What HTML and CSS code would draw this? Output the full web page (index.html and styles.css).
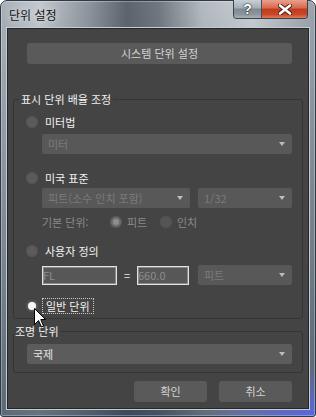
FILE: index.html
```html
<!DOCTYPE html>
<html lang="ko">

<head>
    <meta charset="UTF-8">
    <title>단위 설정</title>
    <link rel="stylesheet" href="styles.css">
</head>

<body>
    <div class="window">
        <div class="titlebar">
            <span class="title">단위 설정</span>
            <div class="caption">
                <div class="cap help">?</div>
                <div class="cap close">
                    <svg width="14" height="11" viewBox="0 0 14 11">
                        <path d="M2 1.5 L12 9.5 M12 1.5 L2 9.5" stroke="#4a1a10" stroke-width="4.4" stroke-linecap="round" />
                        <path d="M2 1.5 L12 9.5 M12 1.5 L2 9.5" stroke="#fff" stroke-width="2.6" stroke-linecap="round" />
                    </svg>
                </div>
            </div>
        </div>

        <div class="client">
            <div class="btn sys">시스템 단위 설정</div>

            <fieldset class="group g1">
                <legend>표시 단위 배율 조정</legend>

                <div class="row">
                    <span class="radio"></span><span class="rlabel">미터법</span>
                </div>
                <div class="combo indent mt4">
                    <span class="val">미터</span><span class="arrow"></span>
                </div>

                <div class="row mt16">
                    <span class="radio"></span><span class="rlabel">미국 표준</span>
                </div>
                <div class="pair indent mt2">
                    <div class="combo w148">
                        <span class="val">피트(소수 인치 포함)</span><span class="arrow"></span>
                    </div>
                    <div class="combo w94">
                        <span class="val">1/32</span><span class="arrow"></span>
                    </div>
                </div>

                <div class="row indent mt6 dim">
                    <span class="base">기본 단위:</span>
                    <span class="opt"><span class="radio small sel"></span><span class="olabel">피트</span></span>
                    <span class="opt"><span class="radio small"></span><span class="olabel">인치</span></span>
                </div>

                <div class="row mt13">
                    <span class="radio"></span><span class="rlabel">사용자 정의</span>
                </div>
                <div class="pair indent mt6">
                    <div class="field w75">FL</div>
                    <span class="eq">=</span>
                    <div class="field w52">660.0</div>
                    <div class="combo w94 gap9">
                        <span class="val">피트</span><span class="arrow"></span>
                    </div>
                </div>

                <div class="row mt13 last">
                    <span class="radio on"></span><span class="rlabel focus">일반 단위</span>
                    <svg class="cursor" width="13" height="20" viewBox="0 0 13 20">
                        <path d="M0.5 0.5 L0.5 16.5 L4.5 12.5 L7.5 19 L9.5 18 L6.8 11.5 L11.5 11.5 Z" fill="#fff" stroke="#000" stroke-width="1" stroke-linejoin="miter" />
                    </svg>
                </div>
            </fieldset>

            <fieldset class="group g2">
                <legend>조명 단위</legend>
                <div class="combo on">
                    <span class="val">국제</span><span class="arrow"></span>
                </div>
            </fieldset>

            <div class="actions">
                <div class="btn ok">확인</div>
                <div class="btn">취소</div>
            </div>
        </div>
    </div>
</body>

</html>
```

FILE: styles.css
```css
* {
    margin: 0;
    padding: 0;
    box-sizing: border-box;
}

body {
    width: 316px;
    height: 417px;
    overflow: hidden;
    background: #fff;
    font-family: "Noto Sans CJK KR", "Liberation Sans", sans-serif;
    font-size: 11px;
}

/* 창 테두리 */
.window {
    width: 316px;
    height: 417px;
    border: 1px solid #2f3a45;
    border-radius: 7px 7px 3px 3px;
    background:
        radial-gradient(ellipse 110px 50px at 100% 100%, rgba(92, 104, 230, .95), rgba(92, 104, 230, 0)),
        linear-gradient(to bottom, rgba(255, 255, 255, 0) 0%, rgba(40, 56, 76, .6) 100%),
        linear-gradient(to right, #a7b0b8 0%, #c3c9cf 12%, #8d959d 28%, #5c646c 40%, #6f777f 50%, #b3bac1 64%, #c9ced3 80%, #9aa2aa 100%);
    box-shadow: inset 0 0 0 1px rgba(255, 255, 255, .3);
    display: flex;
    flex-direction: column;
}

.titlebar {
    height: 27px;
    display: flex;
    align-items: flex-start;
}

.title {
    flex: 1;
    margin-top: 6px;
    padding-left: 8px;
    line-height: 16px;
    font-size: 12px;
    color: #151515;
    text-shadow: 0 0 6px rgba(255, 255, 255, .8);
}

.caption {
    display: flex;
    margin-top: -1px;
    margin-right: 7px;
    border: 1px solid #38434e;
    border-top: none;
    border-radius: 0 0 4px 4px;
    overflow: hidden;
}

.cap {
    height: 18px;
    display: flex;
    align-items: center;
    justify-content: center;
}

.help {
    width: 28px;
    border-right: 1px solid #46505a;
    background: linear-gradient(to bottom, #c8cfd6 0%, #a4adb5 45%, #7f8891 50%, #8d969e 80%, #a9b1b8 100%);
    color: #fff;
    font-family: "Liberation Sans", sans-serif;
    font-weight: bold;
    font-size: 14px;
    text-shadow: 0 0 2px #222, 0 0 1px #000;
}

.close {
    width: 45px;
    background: linear-gradient(to bottom, #e9a08e 0%, #d6684c 45%, #c23a1d 50%, #c9472a 80%, #e07c58 100%);
}

/* 본문 */
.client {
    margin: 0 6px;
    height: 381px;
    background: #444;
    border: 1px solid #262626;
    box-shadow: 0 0 0 1px #c3cdd6;
    display: flex;
    flex-direction: column;
}

.btn {
    height: 21px;
    background: #5a5a5a;
    border-radius: 3px;
    color: #d4d4d4;
    text-align: center;
    line-height: 21px;
}

.sys {
    margin: 14px 16px 0 19px;
}

.group {
    border: 1px solid #353535;
    border-radius: 3px;
    margin: 0 5px;
    min-width: 0;
}

.group legend {
    color: #f0f0f0;
    line-height: 16px;
}

.g1 {
    margin-top: 27px;
    padding: 7px 10px 4px 12px;
}

.g1 legend {
    padding: 0 2px;
    margin-left: -7px;
}

.g2 {
    margin-top: 4px;
    padding: 5px 10px 8px 13px;
}

.g2 legend {
    padding: 0 1px;
    margin-left: -13px;
}

.row {
    display: flex;
    align-items: center;
    height: 16px;
}

.last {
    position: relative;
}

.radio {
    flex: none;
    width: 12px;
    height: 12px;
    border-radius: 50%;
    background: #5b5b5b;
    box-shadow: inset 0 0 0 1px #535353;
    display: flex;
    align-items: center;
    justify-content: center;
}

.radio.on::after {
    content: "";
    width: 8px;
    height: 8px;
    border-radius: 50%;
    background: #f6f6f6;
}

.radio.small {
    background: #555;
}

.radio.sel {
    background: #6e6e6e;
}

.radio.sel::after {
    content: "";
    width: 6px;
    height: 6px;
    border-radius: 50%;
    background: #8e8e8e;
}

.rlabel {
    margin-left: 7px;
    color: #f2f2f2;
    line-height: 16px;
}

.rlabel.focus {
    margin-left: 4px;
    padding: 0 3px;
    line-height: 14px;
    border: 1px dotted #c8c8c8;
}

.cursor {
    position: absolute;
    left: 8px;
    top: 10px;
}

.indent {
    margin-left: 16px;
}

.mt2 { margin-top: 2px; }
.mt4 { margin-top: 4px; }
.mt6 { margin-top: 6px; }
.mt13 { margin-top: 13px; }
.mt16 { margin-top: 16px; }

.combo {
    height: 20px;
    background: #585858;
    border-radius: 2px;
    display: flex;
    align-items: center;
    padding: 0 7px 0 6px;
    color: #7b7b7b;
    white-space: nowrap;
}

.combo .val {
    flex: 1;
}

.combo.on {
    background: #5c5c5c;
    color: #e2e2e2;
}

.arrow {
    width: 0;
    height: 0;
    border-left: 3px solid transparent;
    border-right: 3px solid transparent;
    border-top: 4px solid #bdbdbd;
}

.pair {
    display: flex;
    align-items: center;
}

.w148 { width: 148px; margin-right: 8px; }
.w94 { width: 94px; }
.w75 { width: 75px; }
.w52 { width: 52px; }
.gap9 { margin-left: 9px; }

.field {
    height: 19px;
    background: #575757;
    border: 1px solid #e2e2e2;
    box-shadow: inset 0 0 0 1px #8a8a8a;
    color: #8c8c8c;
    line-height: 17px;
}

.eq {
    width: 20px;
    text-align: center;
    color: #e6e6e6;
}

.dim {
    color: #8a8a8a;
}

.base {
    width: 68px;
}

.opt {
    display: flex;
    align-items: center;
    width: 50px;
}

.olabel {
    margin-left: 5px;
}

.actions {
    display: flex;
    justify-content: flex-end;
    gap: 12px;
    margin: 8px 16px 0 0;
}

.actions .btn {
    width: 73px;
}
```
